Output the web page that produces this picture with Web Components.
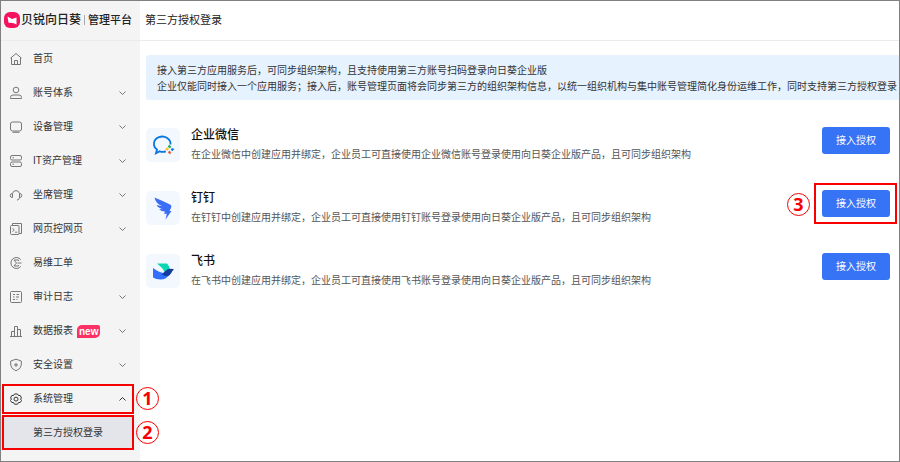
<!DOCTYPE html>
<html lang="zh-CN">
<head>
<meta charset="utf-8">
<meta name="viewport" content="width=device-width, initial-scale=1">
<title>第三方授权登录 - 管理平台</title>
<style>
  :root {
    --side-bg: #f4f4f5;
    --line: #ebebeb;
    --text-color: #333;
    --primary: #3773f5;
    --mark: #f80000;
  }

  * { box-sizing: border-box; }

  body {
    margin: 0;
    color: var(--text-color);
    background: #fff;
    font: 10px/16px "Liberation Sans", "Noto Sans CJK SC", sans-serif;
  }
</style>
</head>
<body>
<admin-layout>
  <brand-logo slot="brand"></brand-logo>
  <nav slot="menu" aria-label="主菜单">
    <menu-item icon="home" label="首页"></menu-item>
    <menu-item icon="user" label="账号体系" arrow="down"></menu-item>
    <menu-item icon="device" label="设备管理" arrow="down"></menu-item>
    <menu-item icon="server" label="IT资产管理" arrow="down"></menu-item>
    <menu-item icon="headset" label="坐席管理" arrow="down"></menu-item>
    <menu-item icon="console" label="网页控网页" arrow="down"></menu-item>
    <menu-item icon="ticket" label="易维工单"></menu-item>
    <menu-item icon="log" label="审计日志" arrow="down"></menu-item>
    <menu-item icon="chart" label="数据报表" arrow="down" badge="new"></menu-item>
    <menu-item icon="shield" label="安全设置" arrow="down"></menu-item>
    <menu-item icon="gear" label="系统管理" arrow="up" active>
      <step-mark number="1"></step-mark>
    </menu-item>
    <menu-item label="第三方授权登录" sub>
      <step-mark number="2"></step-mark>
    </menu-item>
  </nav>
  <span slot="title">第三方授权登录</span>
  <notice-box>
    <div>接入第三方应用服务后，可同步组织架构，且支持使用第三方账号扫码登录向日葵企业版</div>
    <div>企业仅能同时接入一个应用服务；接入后，账号管理页面将会同步第三方的组织架构信息，以统一组织机构与集中账号管理简化身份运维工作，同时支持第三方授权登录</div>
  </notice-box>
  <app-card icon="wecom" name="企业微信">在企业微信中创建应用并绑定，企业员工可直接使用企业微信账号登录使用向日葵企业版产品，且可同步组织架构</app-card>
  <app-card icon="dingtalk" name="钉钉">在钉钉中创建应用并绑定，企业员工可直接使用钉钉账号登录使用向日葵企业版产品，且可同步组织架构
    <step-mark slot="mark" number="3" before></step-mark>
  </app-card>
  <app-card icon="feishu" name="飞书">在飞书中创建应用并绑定，企业员工可直接使用飞书账号登录使用向日葵企业版产品，且可同步组织架构</app-card>
</admin-layout>

<script>
const menuIcons = {
  home: '<path d="M1.5 6.200 7 1.500 12.500 6.200M2.500 5.500V12.500H11.500V5.500M5.500 12.500V8.500H8.500V12.500"/>',
  user: '<circle cx="7" cy="4" r="2.800"/><path d="M1.500 12.500V11.500Q1.500 9 4 9H10Q12.500 9 12.500 11.500V12.500Z"/>',
  device: '<rect x="1.500" y="2" width="11" height="9" rx="2"/><path d="M3.500 12.300H10.500"/>',
  server: '<rect x="1.500" y="1.500" width="11" height="4.500" rx="1.500"/><rect x="1.500" y="8" width="11" height="4.500" rx="1.500"/><path d="M3.500 3.800H5M3.500 10.200H5"/>',
  headset: '<path d="M3.500 9.500V5.500A3.600 3.800 0 0 1 10.500 5.500V9.500Q10.500 11.500 8 12.200M3.500 5.500Q1.200 5.500 1.200 7.500T3.500 9.500M10.500 5.500Q12.800 5.500 12.800 7.500T10.500 9.500"/>',
  console: '<rect x="1.500" y="3.500" width="8.500" height="9" rx="1"/><path d="M3.500 3.500V1.500H12.500V11.500H10M3.500 6.200 5.300 8 3.500 9.800M6 10.200H8.300"/>',
  ticket: '<path d="M11.800 3.700A5.500 5.500 0 1 0 11.800 10.300M9.500 5V4H5L7.500 7 5 10H9.500V9M8.500 7H12.500"/>',
  log: '<rect x="1.500" y="1.500" width="11" height="11" rx="1"/><path d="M4 4.500H6M7.500 4.500H10M4 7H5.500M7 7H10M4 9.500H6M7.500 9.500H8.500"/>',
  chart: '<path d="M1 12.500H13M2.500 12.500V7.500H5.500M5.500 12.500V2.500H8.500V12.500M8.500 5.500H11.500V12.500"/>',
  shield: '<path d="M7 1.200 12.300 3V7Q12 10.800 7 12.800 2 10.800 1.700 7V3ZM7 4.800V9M4.900 6.900H9.100"/>',
  gear: '<path d="M5.500 2H8.500L9.500 3.500H11.200L12.500 6 11.500 7 12.500 8.500 11.200 10.500H9.500L8.500 12.200H5.500L4.500 10.500H2.800L1.500 8.500 2.500 7 1.500 6 2.800 3.500H4.500Z"/><circle cx="7" cy="7.100" r="2"/>'
}

const appIcons = {
  wecom: '<path d="M19.500 12.500A8.300 7.300 0 1 0 6 17.500L5 21.300 8.800 19.300Q12 20.400 14.800 19.300" fill="none" stroke="#0a76e0" stroke-width="1.800"/><path d="M18.200 12.500 20.500 15 18.500 16.200 16.800 14.800Z" fill="#22b14c"/><path d="M23.500 17 21.300 19.200 19.700 17.500 21 16Z" fill="#0a7cf0"/><path d="M19.200 22.500 16.800 20.300 18.300 18.700 20 20Z" fill="#f4511e"/><path d="M14 17.500 16.300 15.300 17.800 17 16.500 18.800Z" fill="#fbbf15"/>',
  dingtalk: '<path d="M3.500 2.500Q12 6 19 9.500 21 10.500 20 13L18.500 16H20.500L14.500 24.500 15.800 18.800H13L14 16.500Q10 16.500 8 14L12 14.200Q7 13 5.500 10L11.500 11.200Q4.500 8.500 3.500 2.500Z" fill="#3b6df6"/>',
  feishu: '<path d="M6 5.500H16Q18.500 8 18.800 11L14.500 15Q11 9 6 5.500Z" fill="#0bd6b2"/><path d="M2 10Q8 14.500 14.500 15.500L19 16Q15.500 21.500 9.500 21.500 5 21.500 2 19.500Z" fill="#3370ff"/><path d="M23 11.500Q21 13 20 15.500 17 20 11 16.500 15.500 11 18 11 21 10.500 23 11.500Z" fill="#153c9a"/>'
}

class AdminLayout extends HTMLElement {
  connectedCallback() {
    this.attachShadow({ mode: 'open' }).innerHTML = `
      <style>
        :host {
          display: grid;
          grid-template-columns: 139px minmax(0, 1fr);
          box-sizing: border-box;
          min-height: 100vh;
          border: 1px solid #808080;
        }
        aside {
          display: flex;
          flex-direction: column;
          gap: 1px;
          background: var(--side-bg);
        }
        .brand, header {
          box-sizing: border-box;
          display: flex;
          align-items: center;
          height: 40px;
          padding-bottom: 2px;
          border-bottom: 1px solid var(--line);
        }
        .brand { padding-left: 3px; }
        header { padding-left: 5px; }
        h1 { margin: 0; font-size: 11px; font-weight: 400; color: #222; }
        main { display: flex; flex-direction: column; }
        .content {
          display: flex;
          flex-direction: column;
          gap: 23px;
          padding: 14px 0 14px 6px;
        }
      </style>
      <aside>
        <div class="brand"><slot name="brand"></slot></div>
        <slot name="menu"></slot>
      </aside>
      <main>
        <header><h1><slot name="title"></slot></h1></header>
        <div class="content"><slot></slot></div>
      </main>
    `
  }
}

class BrandLogo extends HTMLElement {
  connectedCallback() {
    this.attachShadow({ mode: 'open' }).innerHTML = `
      <style>
        :host { display: flex; align-items: center; color: #222; white-space: nowrap; }
        svg { width: 16px; height: 16px; margin-right: 1px; }
        b { font-size: 12px; font-weight: 500; }
        i { width: 1px; height: 10px; margin: 0 3px; background: #aaa; }
        span { font-size: 11px; font-weight: 500; }
      </style>
      <svg viewBox="0 0 16 16" aria-hidden="true">
        <rect width="16" height="16" rx="6" fill="#f5125f"/>
        <path d="M3.500 4.500 8 7 12.500 5.500V12.500L9 11 4.500 10.800Z" fill="#fff"/>
      </svg>
      <b>贝锐向日葵</b><i></i><span>管理平台</span>
    `
  }
}

class MenuItem extends HTMLElement {
  connectedCallback() {
    const icon = menuIcons[this.getAttribute('icon')] ?? ''
    const badge = this.getAttribute('badge')
    const arrow = this.getAttribute('arrow')

    this.attachShadow({ mode: 'open' }).innerHTML = `
      <style>
        :host { display: block; position: relative; }
        a {
          display: flex;
          align-items: center;
          height: 34px;
          padding: 0 14px 0 8px;
          color: inherit;
          text-decoration: none;
        }
        :host([sub]) a { margin-right: 6px; background: #e4e5ea; }
        :host([sub]) ::slotted(step-mark) { top: -1px; bottom: 0; }
        svg { fill: none; stroke: #777; }
        .icon { width: 14px; height: 14px; margin-right: 10px; }
        .arrow { width: 7px; height: 4px; margin-left: auto; }
        :host([active]) svg { stroke: #333; }
        .badge {
          margin-left: 4px;
          padding: 0 2px;
          border-radius: 5px 2px 5px 0;
          background: #fb3164;
          color: #fff;
          font-weight: 700;
          line-height: 13px;
        }
      </style>
      <a href="#">
        <svg class="icon" viewBox="0 0 14 14" aria-hidden="true">${icon}</svg>
        <span>${this.getAttribute('label')}</span>
        ${badge ? `<span class="badge">${badge}</span>` : ''}
        ${arrow ? `<svg class="arrow" viewBox="0 0 7 4" aria-hidden="true"><path d="${arrow === 'up' ? 'M.5 3.500 3.500.5 6.500 3.500' : 'M.5.5 3.500 3.500 6.500.5'}"/></svg>` : ''}
      </a>
      <slot></slot>
    `
  }
}

// Red frame round its parent, with a numbered circle beside it
class StepMark extends HTMLElement {
  connectedCallback() {
    this.attachShadow({ mode: 'open' }).innerHTML = `
      <style>
        :host {
          position: absolute;
          inset: 2px 6px 2px 1px;
          box-sizing: border-box;
          border: 2px solid var(--mark);
          pointer-events: none;
        }
        :host([before]) { inset: -7px -7px -7px -8px; }
        span {
          position: absolute;
          top: 50%;
          left: 100%;
          margin: -12px 0 0 4px;
          box-sizing: border-box;
          width: 23px;
          height: 23px;
          border: 1px solid var(--mark);
          border-radius: 50%;
          color: var(--mark);
          font: 700 18px/21px "Noto Sans", sans-serif;
          text-align: center;
        }
        :host([before]) span { left: auto; right: 100%; margin: -11px 6px 0 0; }
      </style>
      <span>${this.getAttribute('number')}</span>
    `
  }
}

class NoticeBox extends HTMLElement {
  connectedCallback() {
    this.attachShadow({ mode: 'open' }).innerHTML = `
      <style>
        :host {
          display: block;
          margin-bottom: 2px;
          padding: 8px 0 5px 11px;
          border-radius: 3px 0 0 3px;
          background: #e7f2ff;
        }
      </style>
      <slot></slot>
    `
  }
}

class AppCard extends HTMLElement {
  connectedCallback() {
    this.attachShadow({ mode: 'open' }).innerHTML = `
      <style>
        :host { display: flex; align-items: center; padding-right: 9px; }
        .logo {
          display: grid;
          place-items: center;
          width: 34px;
          height: 34px;
          margin-right: 11px;
          border-radius: 5px;
          background: #f3f8ff;
        }
        .logo svg { width: 25px; height: 26px; }
        .text { flex: 1; }
        h2 { margin: 0; font-size: 12px; font-weight: 500; line-height: 20px; color: #111; }
        p { margin: 0; line-height: 20px; color: #555; }
        .action { position: relative; align-self: flex-start; margin-top: 2px; }
        button {
          display: block;
          padding: 0 14px;
          border: 0;
          border-radius: 3px;
          background: var(--primary);
          color: #fff;
          font: inherit;
          line-height: 27px;
        }
      </style>
      <div class="logo"><svg viewBox="0 0 25 26" aria-hidden="true">${appIcons[this.getAttribute('icon')]}</svg></div>
      <div class="text">
        <h2>${this.getAttribute('name')}</h2>
        <p><slot></slot></p>
      </div>
      <div class="action">
        <button type="button">接入授权</button>
        <slot name="mark"></slot>
      </div>
    `
  }
}

customElements.define('admin-layout', AdminLayout)
customElements.define('brand-logo', BrandLogo)
customElements.define('menu-item', MenuItem)
customElements.define('step-mark', StepMark)
customElements.define('notice-box', NoticeBox)
customElements.define('app-card', AppCard)
</script>
</body>
</html>
